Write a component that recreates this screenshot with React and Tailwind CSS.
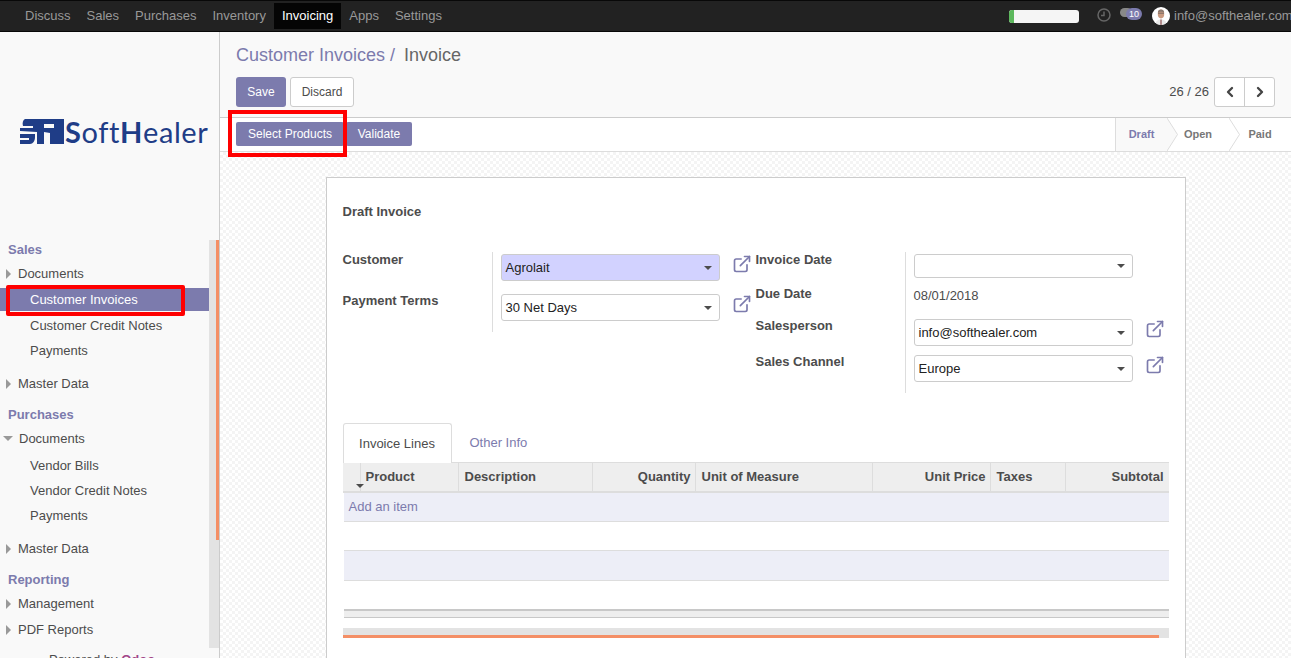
import { ExternalLink, ChevronLeft, ChevronRight } from 'lucide-react'

const navItems = ['Discuss', 'Sales', 'Purchases', 'Inventory', 'Invoicing', 'Apps', 'Settings']

function Caret({ open }) {
  if (open) return <span className="w-0 h-0 ml-[3px] mr-[6px] border-x-[5px] border-x-transparent border-t-[5px] border-t-[#999]" />
  return <span className="w-0 h-0 ml-[6px] mr-[7px] border-y-[5px] border-y-transparent border-l-[5px] border-l-[#999]" />
}

function MenuParent({ label, open, className = '' }) {
  return (
    <div className={`flex items-center h-[25px] ${className}`}>
      <Caret open={open} />
      <span>{label}</span>
    </div>
  )
}

function MenuChild({ label, active }) {
  if (active) {
    return <div className="flex items-center h-[23px] mt-[2px] mb-[2px] pl-[30px] bg-[#7c7bad] text-white">{label}</div>
  }
  return <div className="flex items-center h-[25px] pl-[30px]">{label}</div>
}

function MenuTitle({ label, className = '' }) {
  return <div className={`h-[19px] leading-[19px] pl-2 font-bold text-[#7c7bad] ${className}`}>{label}</div>
}

function Sidebar() {
  return (
    <aside className="w-[220px] shrink-0 flex flex-col bg-[#f9f9f9] border-r border-[#ccc] text-[13px] text-[#4c4c4c]">
      <div className="h-[208px] shrink-0 flex items-start pt-[87px] pl-[20px]">
        <svg width="44" height="25" viewBox="0 0 44 25" className="shrink-0">
          <path fill="#1f3d87" d="M5 0h39v25H30V14l-6-1v12H17V13L0 12V9h13V7H3C2 4 3 1 5 0z" />
          <path fill="#1f3d87" d="M0 15h15v3c0 4-2 7-5 7H0v-4h9v-2H0z" />
          <path fill="#f9f9f9" d="M24 5h10v4H24z" />
        </svg>
        <span className="ml-[1px] -mt-[3px] text-[29px] leading-[31px] text-[#1f3d87] font-['Lato',sans-serif] whitespace-nowrap tracking-[0.6px]">
          <b>S</b>oft<b>H</b>ealer
        </span>
      </div>
      <div className="flex-1 flex min-h-0 h-[440px]">
        <div className="w-[209px] shrink-0 overflow-hidden">
          <MenuTitle label="Sales" />
          <MenuParent label="Documents" className="mt-[2px]" />
          <MenuChild label="Customer Invoices" active />
          <MenuChild label="Customer Credit Notes" />
          <MenuChild label="Payments" />
          <MenuParent label="Master Data" className="mt-[8px]" />
          <MenuTitle label="Purchases" className="mt-[9px]" />
          <MenuParent label="Documents" open className="mt-[2px]" />
          <div className="mt-[2px]">
            <MenuChild label="Vendor Bills" />
            <MenuChild label="Vendor Credit Notes" />
            <MenuChild label="Payments" />
          </div>
          <MenuParent label="Master Data" className="mt-[8px]" />
          <MenuTitle label="Reporting" className="mt-[9px]" />
          <MenuParent label="Management" className="mt-[2px]" />
          <MenuParent label="PDF Reports" className="mt-[1px]" />
          <div className="mt-[8px] text-center pr-[5px]">
            Powered by <span className="font-bold text-[#a24689]">Odoo</span>
          </div>
        </div>
        <div className="w-[10px] h-[408px] shrink-0 bg-[#e3e3e3] flex justify-end">
          <div className="w-[3px] h-[300px] bg-[#f48f66]" />
        </div>
      </div>
    </aside>
  )
}

function Select({ value, tint, className = 'h-[27px]' }) {
  return (
    <div className={`w-[219px] flex items-center justify-between pl-[4px] pr-[7px] rounded-[3px] border border-[#ccc] text-[13px] text-[#222] ${tint ? 'bg-[#d2d2ff]' : 'bg-white'} ${className}`}>
      <span>{value}</span>
      <span className="w-0 h-0 border-x-[4px] border-x-transparent border-t-[4px] border-t-[#4c4c4c]" />
    </div>
  )
}

function OpenLink() {
  return <ExternalLink size={20} strokeWidth={2} className="ml-[12px] mt-[2px] text-[#7c7bad]" />
}

function FieldRow({ label, height, labelPad, children }) {
  return (
    <div className={`flex ${height}`}>
      <div className={`w-[149px] shrink-0 font-bold leading-4 ${labelPad}`}>{label}</div>
      <div className="flex items-start border-l border-[#ddd] pl-2">{children}</div>
    </div>
  )
}

function Th({ label, className }) {
  return <div className={`flex items-center h-full px-[6px] font-bold border-r border-[#ddd] ${className}`}>{label}</div>
}

function InvoiceSheet() {
  return (
    <div className="w-[860px] mx-auto mt-[25px] shrink-0 bg-white border border-[#ccc] pt-[26px] pl-[16px] pr-[16px] text-[13px] text-[#4c4c4c] h-[560px]">
      <div className="h-4 leading-4 font-bold">Draft Invoice</div>
      <div className="flex mt-[32px]">
        <div className="w-[413px] shrink-0">
          <FieldRow label="Customer" height="h-[40px]" labelPad="pt-0">
            <div className="mt-[2px]"><Select value="Agrolait" tint /></div>
            <OpenLink />
          </FieldRow>
          <FieldRow label="Payment Terms" height="h-[40px]" labelPad="pt-[1px]">
            <div className="mt-[2px]"><Select value="30 Net Days" /></div>
            <OpenLink />
          </FieldRow>
        </div>
        <div>
          <FieldRow label="Invoice Date" height="h-[34px]" labelPad="pt-0">
            <div className="mt-[2px]"><Select value="" className="h-[24px]" /></div>
          </FieldRow>
          <FieldRow label="Due Date" height="h-[31px]" labelPad="pt-0">
            <div className="pt-[2px] leading-4">08/01/2018</div>
          </FieldRow>
          <FieldRow label="Salesperson" height="h-[36px]" labelPad="pt-[1px]">
            <div className="mt-[2px]"><Select value="info@softhealer.com" /></div>
            <OpenLink />
          </FieldRow>
          <FieldRow label="Sales Channel" height="h-[40px]" labelPad="pt-[1px]">
            <div className="mt-[2px]"><Select value="Europe" /></div>
            <OpenLink />
          </FieldRow>
        </div>
      </div>

      <div className="flex h-[40px] mt-[30px] -mb-px">
        <div className="w-[109px] flex items-center justify-center bg-white border border-b-0 border-[#ddd] rounded-t-[3px] relative z-10">Invoice Lines</div>
        <div className="flex items-center pl-[18px] text-[#7c7bad]">Other Info</div>
      </div>
      <div className="w-[826px] text-[13px]">
        <div className="flex h-[31px] bg-[#eee] border-t border-[#ddd] border-b-2 border-b-[#ddd]">
          <div className="w-[18px] h-full border-r border-[#ddd] shrink-0" />
          <div className="relative w-[98px] shrink-0 h-full">
            <Th label="Product" className="w-full !px-[5px]" />
            <span className="absolute -left-[5px] top-[21px] w-0 h-0 border-x-[4px] border-x-transparent border-t-[4px] border-t-[#4c4c4c]" />
          </div>
          <Th label="Description" className="w-[134px] shrink-0" />
          <Th label="Quantity" className="w-[103px] shrink-0 justify-end !px-[4px]" />
          <Th label="Unit of Measure" className="w-[177px] shrink-0" />
          <Th label="Unit Price" className="w-[118px] shrink-0 justify-end !px-[4px]" />
          <Th label="Taxes" className="w-[75px] shrink-0" />
          <div className="flex-1 flex items-center justify-end px-[5px] font-bold">Subtotal</div>
        </div>
        <div className="ml-px">
          <div className="h-[29px] flex items-center pl-[5px] bg-[#edeef7] border-b border-[#ddd] text-[#7c7bad]">Add an item</div>
          <div className="h-[29px] border-b border-[#ddd] bg-white" />
          <div className="h-[30px] border-b border-[#ddd] bg-[#edeef7]" />
          <div className="h-[28px] bg-white" />
          <div className="h-[9px] bg-[#eee] border-t-2 border-b border-[#c8c8c8]" />
        </div>
        <div className="h-[10px] mt-[10px] bg-[#e3e3e3] flex items-end">
          <div className="w-[816px] h-[3px] bg-[#f48f66]" />
        </div>
      </div>
    </div>
  )
}

function StatusStep({ label, active, width }) {
  return (
    <div className={`relative h-full flex items-center justify-center font-bold text-[11px] ${width} ${active ? 'bg-[#f9f9f9] text-[#7c7bad] border-l border-[#ddd]' : 'text-[#777]'}`}>
      {label}
    </div>
  )
}

function StatusChevron({ fill }) {
  return (
    <svg width="11" height="33" viewBox="0 0 11 33" className="shrink-0 -mr-[11px] relative z-10">
      <path d="M0 0 L10.5 16.5 L0 33" fill={fill} stroke="#ddd" strokeWidth="1" />
    </svg>
  )
}

export default function App() {
  return (
    <div className="h-[658px] w-[1291px] overflow-hidden flex flex-col font-['Liberation_Sans',Arial,sans-serif] relative bg-white">
      <nav className="h-[32px] shrink-0 flex items-center justify-between bg-[#222] border-y border-[#080808] text-[13px] text-[#999]">
        <div className="flex items-center h-full pl-[17px]">
          {navItems.map(item => (
            <div key={item} className={`h-[26px] flex items-center px-2 ${item === 'Invoicing' ? 'bg-[#050505] text-white' : ''}`}>{item}</div>
          ))}
        </div>
        <div className="flex items-center h-full whitespace-nowrap -mr-[1px]">
          <div className="w-[70px] h-[13px] rounded-[3px] bg-[#f5f5f5] overflow-hidden">
            <div className="w-[5px] h-full bg-[#5cb85c]" />
          </div>
          <svg width="14" height="14" viewBox="0 0 14 14" className="ml-[18px] -mt-[2px]" fill="none" stroke="#666" strokeWidth="1.5">
            <circle cx="7" cy="7" r="6" />
            <path d="M7 3.5V7.5H4" />
          </svg>
          <div className="relative w-[22px] h-[14px] ml-[9px] -mt-[2px]">
            <span className="absolute left-0 top-0 w-[12px] h-[9px] rounded-[5px] bg-[#888]" />
            <span className="absolute left-[6px] top-0 w-[16px] h-[12px] rounded-[6px] bg-[#7c7bad] text-white text-[9px] leading-[12px] text-center">10</span>
          </div>
          <div className="ml-[10px] w-[18px] h-[18px] rounded-full bg-white overflow-hidden shrink-0">
            <svg width="18" height="18" viewBox="0 0 18 18">
              <ellipse cx="9" cy="7" rx="3.2" ry="4.4" fill="#c99a80" />
              <path d="M5.8 5.5C6 3 8 2.4 9 2.4s3 .6 3.2 3.1C11 4.4 7 4.4 5.8 5.5z" fill="#8a7a70" />
              <path d="M6 6.2h6" stroke="#555" strokeWidth=".7" />
              <path d="M3 18c.3-4 3-5.5 6-5.5s5.7 1.500 6 5.500z" fill="#e8e8e8" />
              <path d="M8.500 12.500h1L9.500 18h-1z" fill="#7a3030" />
            </svg>
          </div>
          <span className="ml-[4px] w-[118px]">info@softhealer.com</span>
        </div>
      </nav>

      <div className="flex-1 flex min-h-0">
        <Sidebar />
        <main className="flex-1 min-w-0 flex flex-col">
          <div className="h-[86px] shrink-0 bg-[#f9f9f9] border-b border-[#ccc] px-[16px] text-[#4c4c4c]">
            <div className="pt-[12px] h-[45px] text-[18px] leading-[22px]">
              <span className="text-[#7c7bad]">Customer Invoices</span>
              <span className="text-[#7c7bad] ml-[5px]">/</span>
              <span className="ml-[9px] text-[#666]">Invoice</span>
            </div>
            <div className="flex items-center justify-between text-[12px]">
              <div className="flex gap-[4px]">
                <div className="w-[50px] h-[30px] flex items-center justify-center rounded-[3px] bg-[#7c7bad] text-white">Save</div>
                <div className="w-[64px] h-[30px] flex items-center justify-center rounded-[3px] bg-white border border-[#ccc]">Discard</div>
              </div>
              <div className="flex items-center text-[13px]">
                <span className="mr-[5px]">26 / 26</span>
                <div className="flex w-[61px] h-[30px] rounded-[3px] bg-white border border-[#ccc]">
                  <div className="w-[30px] flex items-center justify-center border-r border-[#ccc]">
                    <ChevronLeft size={16} strokeWidth={3.5} className="text-[#444]" />
                  </div>
                  <div className="flex-1 flex items-center justify-center">
                    <ChevronRight size={16} strokeWidth={3.5} className="text-[#444]" />
                  </div>
                </div>
              </div>
            </div>
          </div>
          <div className="h-[34px] shrink-0 bg-white border-b border-[#ddd] flex items-center justify-between pl-[16px] text-[12px]">
            <div className="flex gap-[2px] -mt-[1px]">
              <div className="w-[108px] h-[24px] flex items-center justify-center rounded-[2px] bg-[#7c7bad] text-white">Select Products</div>
              <div className="w-[66px] h-[24px] flex items-center justify-center rounded-[2px] bg-[#7c7bad] text-white">Validate</div>
            </div>
            <div className="flex items-center h-full w-[176px] shrink-0">
              <StatusStep label="Draft" active width="w-[52px]" />
              <StatusChevron fill="#f9f9f9" />
              <StatusStep label="Open" width="w-[62px]" />
              <StatusChevron fill="#fff" />
              <StatusStep label="Paid" width="w-[62px]" />
            </div>
          </div>
          <div className="flex-1 min-h-0 overflow-hidden flex flex-col bg-[repeating-conic-gradient(#f4f4f4_0_25%,#fff_0_50%)] bg-[length:6px_6px] border-l-0">
            <InvoiceSheet />
          </div>
        </main>
      </div>

      <div className="absolute left-[228px] top-[110px] w-[119px] h-[47px] border-[4px] border-[#f00]" />
      <div className="absolute left-[6px] top-[285px] w-[179px] h-[31px] rounded-[2px] border-[4px] border-[#f00]" />
    </div>
  )
}
